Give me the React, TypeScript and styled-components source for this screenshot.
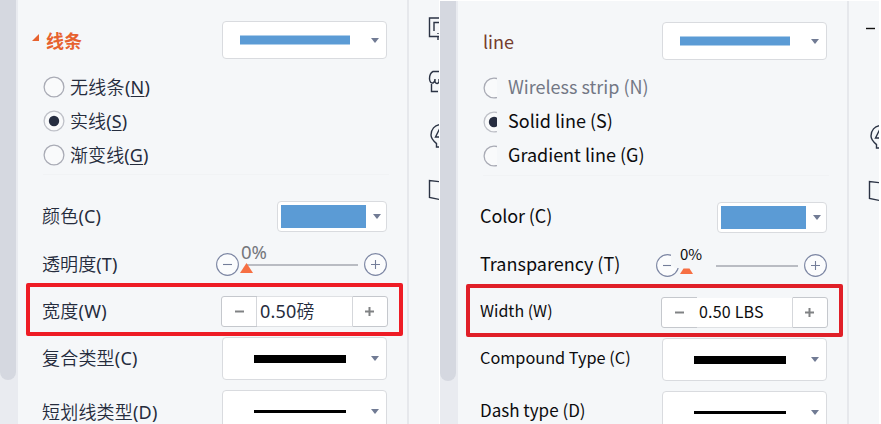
import React from "react";
import styled, { createGlobalStyle } from "styled-components";

const Global = createGlobalStyle`
  * { box-sizing: border-box; }
  body { margin: 0; background: #fff; overflow: hidden; }
`;

const CJK = `"Noto Sans CJK SC", sans-serif`;

const Page = styled.main`
  display: flex;
  width: 881px;
  height: 424px;
  overflow: hidden;
  background: #fff;
`;

const Panel = styled.section<{ $top: number; $font: string; $ink: string; $weight: number }>`
  display: grid;
  grid-template-columns: 18px 391px 1fr;
  width: 439px;
  height: ${(p) => 424 - p.$top}px;
  margin-top: ${(p) => p.$top}px;
  margin-right: 1px;
  flex: none;
  overflow: hidden;
  background: #f5f7f9;
  color: ${(p) => p.$ink};
  font-family: ${(p) => p.$font};
  font-weight: ${(p) => p.$weight};
`;

const ScrollTrack = styled.div`
  background: #e9ebf0;
`;

const ScrollThumb = styled.div`
  width: 16px;
  height: 380px;
  background: #d5d8e0;
  border-radius: 0 0 8px 8px;
`;

const Form = styled.div`
  width: 391px;
  height: 460px;
  border-right: 2px solid #e6e8ec;
`;

const Row = styled.div<{ $h: number; $pt?: number; $left?: number }>`
  display: flex;
  align-items: center;
  justify-content: space-between;
  height: ${(p) => p.$h}px;
  padding: ${(p) => p.$pt ?? 0}px 20px 0 ${(p) => p.$left ?? 24}px;
`;

const Label = styled.span<{ $size?: number; $track?: number; $dy?: number; $color?: string; $bold?: boolean }>`
  font-size: ${(p) => p.$size ?? 18}px;
  letter-spacing: ${(p) => p.$track ?? 0}px;
  line-height: 24px;
  margin-top: ${(p) => (p.$dy ?? 0) * 2}px;
  white-space: pre;
  font-weight: ${(p) => (p.$bold ? 700 : "inherit")};
  color: ${(p) => p.$color ?? "inherit"};
`;

const Latin = styled.span`
  font-weight: 400;
`;

const Key = styled.u`
  text-decoration-thickness: 1px;
  text-underline-offset: 2px;
`;

const Heading = styled.div`
  display: flex;
  align-items: center;
  gap: 7px;
  margin-top: 11px;
`;

const Radios = styled.div`
  display: flex;
  flex-direction: column;
  padding-left: 25px;
`;

const RadioRow = styled.label<{ $gap: number }>`
  display: flex;
  align-items: center;
  gap: ${(p) => p.$gap}px;
  height: 34px;
`;

const RadioClip = styled.span<{ $clip: boolean }>`
  display: block;
  width: ${(p) => (p.$clip ? 14 : 22)}px;
  height: 22px;
  overflow: hidden;
  flex: none;
`;

const Divider = styled.div`
  height: 1px;
  margin: 2px 18px 17px 25px;
  background: #f1f3f5;
`;

const Dropdown = styled.div<{ $h: number; $w?: number; $padL: number; $padR?: number; $mt?: number }>`
  display: flex;
  align-items: center;
  justify-content: space-between;
  width: ${(p) => p.$w ?? 165}px;
  height: ${(p) => p.$h}px;
  margin-top: ${(p) => p.$mt ?? 0}px;
  padding: 0 ${(p) => p.$padR ?? 7}px 0 ${(p) => p.$padL}px;
  border: 1px solid #d9dbdf;
  border-radius: 4px;
  background: #fff;
`;

const Stroke = styled.div<{ $w: number; $h: number; $color: string; $soft?: boolean }>`
  width: ${(p) => p.$w}px;
  height: ${(p) => p.$h}px;
  background: ${(p) => p.$color};
  border: solid #accdea;
  border-width: ${(p) => (p.$soft ? 1 : 0)}px 0;
  background-clip: padding-box;
`;

const Slider = styled.div`
  display: flex;
  align-items: center;
  width: 171px;
  height: 24px;
`;

const Rail = styled.div<{ $clip: boolean }>`
  position: relative;
  flex: 1;
  height: 2px;
  margin: 0 6px 0 ${(p) => (p.$clip ? 37 : 7)}px;
  background: #b9bcc3;
`;

const Thumb = styled.svg<{ $left: number }>`
  position: absolute;
  left: ${(p) => p.$left}px;
  top: -1px;
`;

const Percent = styled.span<{ $left: number; $top: number; $size: number; $color: string }>`
  position: absolute;
  left: ${(p) => p.$left}px;
  top: ${(p) => p.$top}px;
  font-size: ${(p) => p.$size}px;
  font-weight: 400;
  line-height: 20px;
  color: ${(p) => p.$color};
`;

const RoundIcon = styled.svg`
  flex: none;
`;

const Highlight = styled.div<{ $color: string; $inset: number }>`
  width: 377px;
  height: 53px;
  margin-left: 8px;
  padding: 4px 11px 0 ${(p) => p.$inset}px;
  border: 4px solid ${(p) => p.$color};
  border-radius: 2px;
  display: flex;
  align-items: center;
  justify-content: space-between;
`;

const Stepper = styled.div`
  display: grid;
  grid-template-columns: 35px 96px 1fr;
  width: 167px;
  height: 31px;
  border: 1px solid #c5c8cd;
  border-radius: 3px;
  background: #fff;
`;

const StepCell = styled.div<{ $edge?: string }>`
  display: flex;
  align-items: center;
  justify-content: center;
  border-right: 1px solid ${(p) => p.$edge ?? "transparent"};
`;

const StepValue = styled.div<{ $pad: number; $mask: boolean }>`
  display: flex;
  align-items: center;
  padding-left: ${(p) => p.$pad}px;
  border-right: 1px solid #d5d7db;
  margin: -1px 0;
  border-top: 1px solid ${(p) => (p.$mask ? "#f5f7f9" : "#dfe1e4")};
  border-bottom: 1px solid #dfe1e4;
`;

const Tools = styled.aside`
  display: flex;
  flex-direction: column;
  overflow: hidden;
`;

const Caret = () => (
  <svg width="8" height="5" viewBox="0 0 8 5">
    <path d="M0 0H8L4 5Z" fill="#717b94" />
  </svg>
);

const RoundButton = ({ plus, clip }: { plus?: boolean; clip?: boolean }) => (
  <RoundIcon width="23" height="24" viewBox="0 0 23 24">
    <circle cx="11.5" cy="11.5" r="10.9" fill="#fbfcfd" stroke="#7c86a3" strokeWidth="1.1" />
    <path d={plus ? "M7 11.5H16M11.5 7V16" : "M7 11.5H16"} stroke="#737d99" strokeWidth="1.1" />
    {clip && <path d="M15 0H23V14H18V12.500H15Z" fill="#f5f7f9" />}
  </RoundIcon>
);

const Radio = ({ on, clip }: { on?: boolean; clip: boolean }) => (
  <RadioClip $clip={clip}>
    <svg width="22" height="22" viewBox="0 0 22 22">
      <circle cx="11" cy="11" r="9.9" fill="#f9fafb" stroke={on ? "#bfc1c8" : "#a9abb5"} strokeWidth="1.3" />
      {on && <circle cx="11" cy="11" r="5.2" fill="#262d40" />}
    </svg>
  </RadioClip>
);

const ToolIcons = ({ partial }: { partial: boolean }) => (
  <svg width="30" height="424" viewBox="409 0 30 424" fill="none" stroke="#2b3344" strokeWidth="1.4">
    {partial ? (
      <path d="M426 27.5H435" stroke="#111" />
    ) : (
      <>
        <path d="M445 18H429.5V36.5H445M445 22.5H434V31M438 33V34M438 37V40" />
        <path d="M445 71.5H433Q429.500 73 429.500 79Q430 83.500 433 83Q435 82 435 79V82Q437 85 439 82V79M431.500 84V91.500H438" />
      </>
    )}
    <path d="M442 124.500C434 124.500 431 130 431 135C431 139 433.500 141 436.500 143.500V147H442M440 128L435.500 137H442" />
    <path d="M442 182L429.500 180.500V197.500L442 200" />
  </svg>
);

type Txt = { t: React.ReactNode; size?: number; track?: number; dy?: number; color?: string };

type PanelData = {
  translated: boolean;
  title: Txt;
  radios: Txt[];
  color: Txt;
  transparency: Txt;
  width: Txt;
  value: Txt;
  compound: Txt;
  dash: Txt;
};

const T = ({ d, bold }: { d: Txt; bold?: boolean }) => (
  <Label $size={d.size} $track={d.track} $dy={d.dy} $color={d.color} $bold={bold}>
    {d.t}
  </Label>
);

const zh: PanelData = {
  translated: false,
  title: { t: "线条", color: "#e7622f" },
  radios: [
    { t: <>无线条<Latin>(<Key>N</Key>)</Latin></>, track: 0.3 },
    { t: <>实线<Latin>(<Key>S</Key>)</Latin></>, track: 0.1 },
    { t: <>渐变线<Latin>(<Key>G</Key>)</Latin></>, track: 0.1 },
  ],
  color: { t: <>颜色<Latin>(C)</Latin></>, track: 0.2, dy: -1 },
  transparency: { t: <>透明度<Latin>(T)</Latin></>, track: 0.1, dy: -1 },
  width: { t: <>宽度<Latin>(W)</Latin></>, track: 0.3, dy: -1 },
  value: { t: <><Latin>0.50</Latin>磅</>, dy: -1, track: 0.2 },
  compound: { t: <>复合类型<Latin>(C)</Latin></>, track: 0.2, dy: -1 },
  dash: { t: <>短划线类型<Latin>(D)</Latin></>, track: 0.2 },
};

const en: PanelData = {
  translated: true,
  title: { t: "line", color: "#743c2d", dy: -1 },
  radios: [
    { t: "Wireless strip (N)", color: "#737785", dy: -2 },
    { t: "Solid line (S)", dy: -2 },
    { t: "Gradient line (G)", dy: -2 },
  ],
  color: { t: "Color (C)", dy: -3, track: -0.1 },
  transparency: { t: "Transparency (T)", dy: -3 },
  width: { t: "Width (W)", size: 16, dy: -3 },
  value: { t: "0.50 LBS", size: 16, dy: -2, track: 0.2 },
  compound: { t: "Compound Type (C)", size: 16.3, dy: -3 },
  dash: { t: "Dash type (D)", size: 17, dy: -3 },
};

const LinePanel = ({ d }: { d: PanelData }) => {
  const tr = d.translated;
  const left = tr ? 22 : 24;
  return (
    <Panel
      $top={tr ? 1 : 0}
      $font={tr ? CJK : `"Noto Sans", ${CJK}`}
      $ink={tr ? "#0c0c0e" : "#252c3d"}
      $weight={tr ? 400 : 350}
    >
      <ScrollTrack>
        <ScrollThumb />
      </ScrollTrack>
      <Form>
        <Row $h={70} $left={tr ? 25 : 14}>
          <Heading>
            {!tr && (
              <svg width="7" height="13" viewBox="0 0 7 13">
                <path d="M7 0V7H0Z" fill="#e7622f" />
              </svg>
            )}
            <T d={d.title} bold={!tr} />
          </Heading>
          <Dropdown $h={38} $padL={17} $mt={10}>
            <Stroke $w={110} $h={10} $color="#5b9bd5" $soft />
            <Caret />
          </Dropdown>
        </Row>
        <Radios>
          {d.radios.map((r, i) => (
            <RadioRow key={i} $gap={tr ? 11 : 5}>
              <Radio on={i === 1} clip={tr} />
              <T d={r} />
            </RadioRow>
          ))}
        </Radios>
        <Divider />
        <Row $h={49} $left={left}>
          <T d={d.color} />
          <Dropdown $h={31} $w={110} $padL={3} $padR={5}>
            <Stroke $w={85} $h={23} $color="#5b9bd5" />
            <Caret />
          </Dropdown>
        </Row>
        <Row $h={42} $pt={5} $left={left}>
          <T d={d.transparency} />
          <Slider>
            <RoundButton clip={tr} />
            <Rail $clip={tr}>
              <Percent $left={tr ? -36 : -5} $top={tr ? -21 : -22} $size={tr ? 15 : 18.5} $color={tr ? "#0c0c0e" : "#74767c"}>
                0%
              </Percent>
              <Thumb $left={tr ? -36 : -6} width="13" height="10" viewBox="0 0 13 10">
                <path d={tr ? "M3.500 4.500H9.500L13 10H0Z" : "M6.500 0L13 10H0Z"} fill="#f66f43" />
              </Thumb>
            </Rail>
            <RoundButton plus />
          </Slider>
        </Row>
        <Highlight $color={tr ? "#e01f28" : "#ee1c25"} $inset={tr ? 10 : 12}>
          <T d={d.width} />
          <Stepper>
            <StepCell $edge={tr ? undefined : "#d5d7db"}>
              <svg width="9" height="9"><path d="M0 4.500H9" stroke="#808284" strokeWidth="2" /></svg>
            </StepCell>
            <StepValue $pad={tr ? 2 : 3} $mask={tr}>
              <T d={d.value} />
            </StepValue>
            <StepCell>
              <svg width="9" height="9"><path d="M0 4.500H9M4.500 0V9" stroke="#808284" strokeWidth="2" /></svg>
            </StepCell>
          </Stepper>
        </Highlight>
        <Row $h={45} $left={left}>
          <T d={d.compound} />
          <Dropdown $h={43} $padL={31}>
            <Stroke $w={92} $h={8} $color="#000" />
            <Caret />
          </Dropdown>
        </Row>
        <Row $h={61} $left={left}>
          <T d={d.dash} />
          <Dropdown $h={43} $padL={31}>
            <Stroke $w={92} $h={3} $color="#000" />
            <Caret />
          </Dropdown>
        </Row>
      </Form>
      <Tools>
        <ToolIcons partial={tr} />
      </Tools>
    </Panel>
  );
};

export default function App() {
  return (
    <Page>
      <Global />
      <LinePanel d={zh} />
      <LinePanel d={en} />
    </Page>
  );
}
